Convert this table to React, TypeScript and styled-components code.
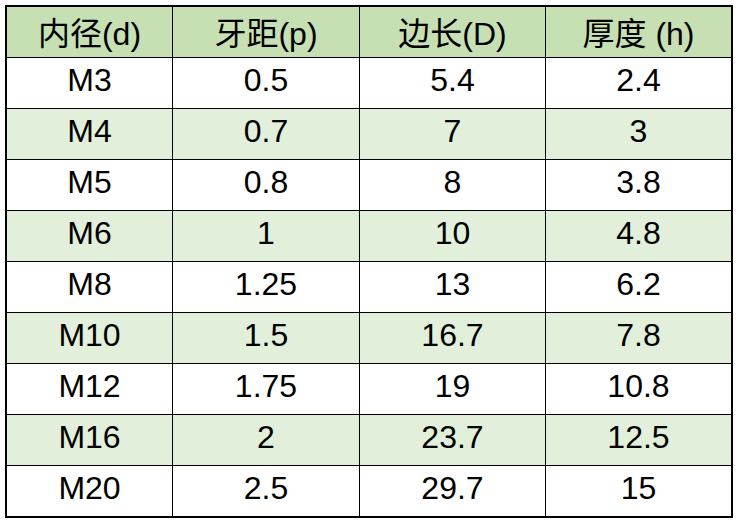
import React from 'react';
import styled, { createGlobalStyle } from 'styled-components';

const GlobalStyle = createGlobalStyle`
  html, body {
    margin: 0;
    padding: 0;
    background: #ffffff;
  }
`;

const headers = ['内径(d)', '牙距(p)', '边长(D)', '厚度 (h)'];

const rows: string[][] = [
  ['M3', '0.5', '5.4', '2.4'],
  ['M4', '0.7', '7', '3'],
  ['M5', '0.8', '8', '3.8'],
  ['M6', '1', '10', '4.8'],
  ['M8', '1.25', '13', '6.2'],
  ['M10', '1.5', '16.7', '7.8'],
  ['M12', '1.75', '19', '10.8'],
  ['M16', '2', '23.7', '12.5'],
  ['M20', '2.5', '29.7', '15'],
];

const App: React.FC = () => {
  return (
    <>
      <GlobalStyle />
      <Page>
        <Grid>
          {headers.map((h) => (
            <HeadCell key={h}>{h}</HeadCell>
          ))}
          {rows.map((row, i) =>
            row.map((v, j) => (
              <Cell key={`${i}-${j}`} $striped={i % 2 === 1}>
                {v}
              </Cell>
            ))
          )}
        </Grid>
      </Page>
    </>
  );
};

const Page = styled.div`
  padding: 5px;
`;

const Grid = styled.div`
  display: grid;
  grid-template-columns: 165px 186px 185px 185px;
  grid-auto-rows: 50px;
  gap: 1px;
  width: max-content;
  background: #000;
  border: 2px solid #000;
`;

const BaseCell = styled.div`
  display: flex;
  align-items: center;
  justify-content: center;
  color: #000;
  font-size: 32px;
  line-height: 1;
  white-space: pre;
`;

const HeadCell = styled(BaseCell)`
  background: #c6e0b4;
  font-family: 'Liberation Sans', 'Noto Sans CJK SC', sans-serif;
  padding-top: 4px;
`;

const Cell = styled(BaseCell)<{ $striped: boolean }>`
  background: ${(p) => (p.$striped ? '#e2efda' : '#ffffff')};
  font-family: 'Liberation Sans', Arial, sans-serif;
  padding-bottom: 6px;
`;

export default App;
